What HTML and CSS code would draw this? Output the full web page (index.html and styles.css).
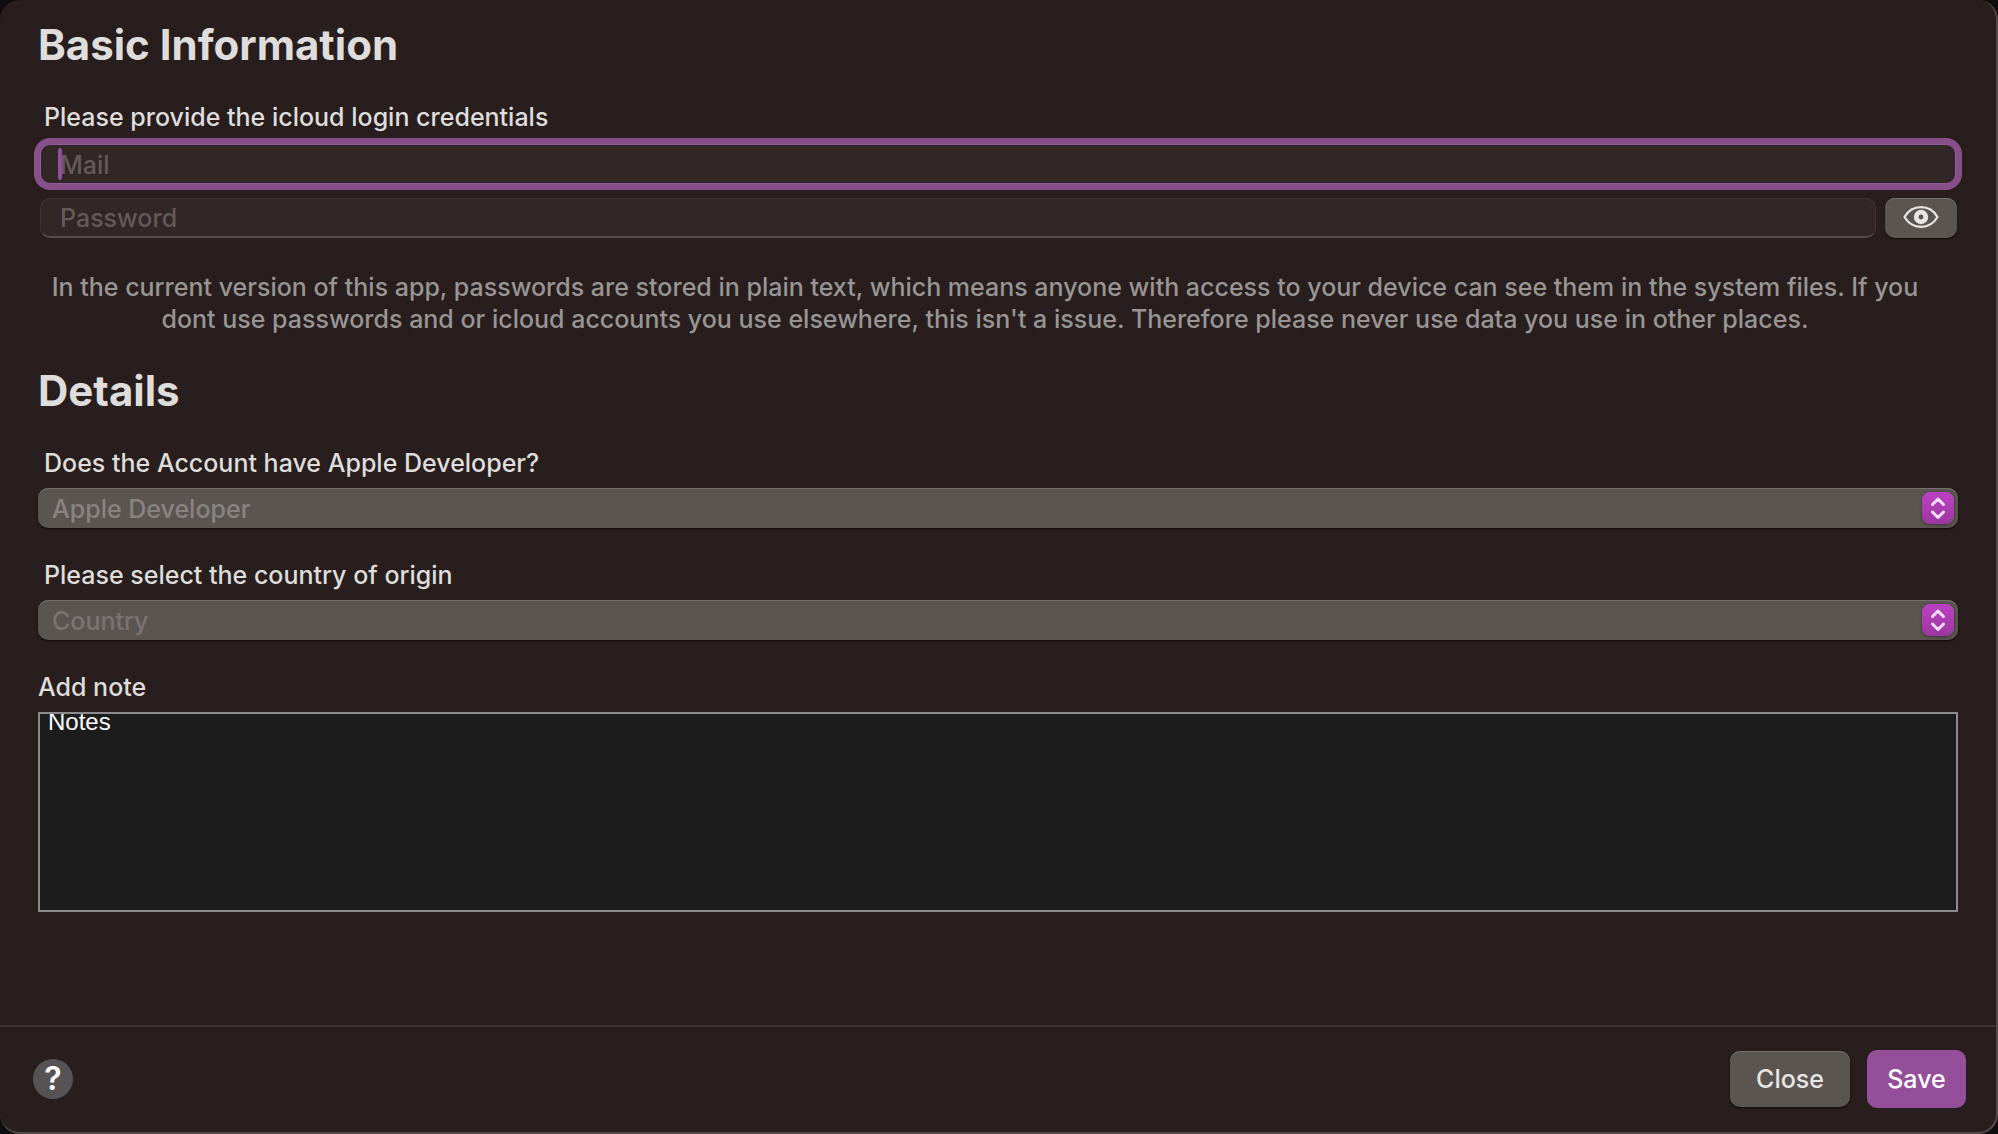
FILE: index.html
```html
<!DOCTYPE html>
<html lang="en">
<head>
<meta charset="utf-8">
<meta name="viewport" content="width=device-width, initial-scale=1">
<title>Account</title>
<link rel="stylesheet" href="styles.css">
</head>
<body>
<form class="sheet">
  <main class="content">
    <section>
      <h1 class="title">Basic Information</h1>
      <label class="label" for="mail">Please provide the icloud login credentials</label>
      <div class="mail-row">
        <input class="field field-active" id="mail" type="email" placeholder="Mail" autofocus>
        <span class="caret"></span>
      </div>
      <div class="password-row">
        <input class="field" type="password" placeholder="Password" aria-label="Password">
        <button class="button reveal" type="button" aria-label="Show password">
          <svg width="36" height="24" viewBox="0 0 36 24" fill="none">
            <path d="M1.500 11C5 5 11 1.200 18 1.200S31 5 34.500 11c-3.500 6-9.500 9.800-16.500 9.800S5 17 1.500 11Z" stroke="currentColor" stroke-width="2.200" stroke-linejoin="round"/>
            <circle cx="18" cy="11" r="4.800" stroke="currentColor" stroke-width="4.800"/>
          </svg>
        </button>
      </div>
      <p class="warning">In the current version of this app, passwords are stored in plain text, which means anyone with access to your device can see them in the system files. If you dont use passwords and or icloud accounts you use elsewhere, this isn't a issue. Therefore please never use data you use in other places.</p>
    </section>
    <section>
      <h2 class="title">Details</h2>
      <label class="label" for="developer">Does the Account have Apple Developer?</label>
      <div class="picker">
        <select class="select" id="developer"><option>Apple Developer</option></select>
        <svg class="stepper" viewBox="0 0 32 32" fill="none"><path d="M10.500 12.500 16 7l5.500 5.500M10.500 20 16 25.500l5.500-5.500" stroke="currentColor" stroke-width="3" stroke-linecap="round" stroke-linejoin="round"/></svg>
      </div>
      <label class="label" for="country">Please select the country of origin</label>
      <div class="picker">
        <select class="select select-dim" id="country"><option>Country</option></select>
        <svg class="stepper" viewBox="0 0 32 32" fill="none"><path d="M10.500 12.500 16 7l5.500 5.500M10.500 20 16 25.500l5.500-5.500" stroke="currentColor" stroke-width="3" stroke-linecap="round" stroke-linejoin="round"/></svg>
      </div>
      <label class="label label-flush" for="notes">Add note</label>
      <textarea class="notes" id="notes">Notes</textarea>
    </section>
  </main>
  <footer class="footer">
    <button class="help" type="button" aria-label="Help">?</button>
    <div class="actions">
      <button class="button close" type="button">Close</button>
      <button class="save" type="submit">Save</button>
    </div>
  </footer>
</form>
</body>
</html>
```
FILE: styles.css
```css
* { box-sizing: border-box; }

body {
  margin: 0;
  background: #0f0d0d;
  color: #dfdddc;
  font: 500 25px/32px Inter, "Liberation Sans", sans-serif;
}

button, input, select { font: inherit; }

.sheet {
  display: flex;
  flex-direction: column;
  min-height: 100vh;
  background: #271e1d;
  border: solid #524a49;
  border-width: 0 2px 2px 0;
  border-radius: 20px;
}

.content {
  flex: 1;
  padding: 21px 38px 0;
}

.title {
  margin: 0 0 32px;
  font-size: 42px;
  line-height: 48px;
  font-weight: 700;
}

.label {
  display: block;
  margin: 0 6px 9px;
}

.label-flush { margin-left: 0; }

.field {
  display: block;
  width: 100%;
  height: 40px;
  padding: 1px 19px 0;
  border: 1px solid #3d3433;
  border-bottom: 2px solid #544b4a;
  border-radius: 10px;
  background: #312726;
  color: #dfdddc;
  outline: none;
}

.field::placeholder { color: #635a59; opacity: 1; }

.mail-row {
  position: relative;
  margin: 11px 2px 0;
}

.field-active {
  border: 1px solid #95599a;
  box-shadow: 0 0 0 6px #87508a;
  caret-color: transparent;
}

.caret {
  position: absolute;
  top: 4px;
  left: 18px;
  width: 4px;
  height: 32px;
  border-radius: 2px;
  background: #954f9a;
}

.password-row {
  display: flex;
  gap: 9px;
  margin: 14px 1px 0 2px;
}

.button {
  border: 0;
  border-radius: 10px;
  background: #5b5551;
  color: #e8e6e5;
  box-shadow: inset 0 1px #77716e, 0 1px 2px #0f0b0b;
}

.reveal {
  display: flex;
  flex: none;
  align-items: center;
  justify-content: center;
  width: 72px;
  padding: 0;
}

.warning {
  margin: 33px 26px 32px 0;
  color: #999594;
  text-align: center;
}

.picker {
  position: relative;
  margin-bottom: 31px;
}

.select {
  appearance: none;
  display: block;
  width: 100%;
  height: 40px;
  padding: 1px 14px 0;
  border: 0;
  border-radius: 10px;
  background: #5b5551;
  color: #888381;
  box-shadow: inset 0 1px #77716e, 0 1px 2px #0f0b0b;
}

.select-dim { color: #797371; }

.stepper {
  position: absolute;
  top: 4px;
  right: 4px;
  width: 32px;
  height: 32px;
  border-radius: 8px;
  background: linear-gradient(#bd40c5, #9c379f);
  color: #f4dff5;
  box-shadow: 0 1px 3px #3b3336;
  pointer-events: none;
}

.notes {
  display: block;
  width: 100%;
  height: 200px;
  padding: 0 8px;
  border: 2px solid #8c8a8c;
  border-radius: 0;
  background: #1c1c1c;
  color: #fff;
  font: 24px/16px "Liberation Sans", Arial, sans-serif;
  outline: none;
  resize: none;
}

.footer {
  display: flex;
  align-items: center;
  justify-content: space-between;
  padding: 23px 30px 24px 33px;
  border-top: 2px solid #3b3231;
}

.help {
  width: 40px;
  height: 40px;
  padding: 0;
  border: 0;
  border-radius: 50%;
  background: #575253;
  color: #fff;
  font-size: 32px;
  font-weight: 600;
}

.actions {
  display: flex;
  align-items: center;
  gap: 17px;
}

.close {
  width: 120px;
  height: 56px;
}

.save {
  width: 99px;
  height: 58px;
  padding: 0;
  border: 0;
  border-radius: 10px;
  background: #954f9a;
  color: #fff;
}
```
